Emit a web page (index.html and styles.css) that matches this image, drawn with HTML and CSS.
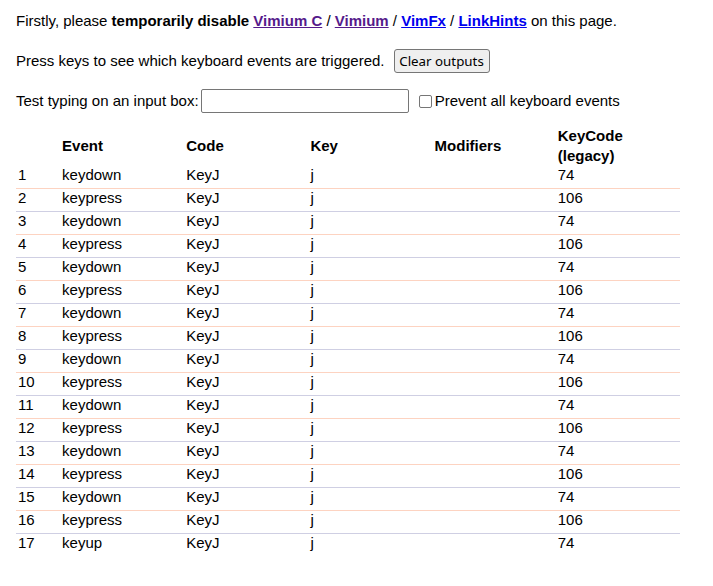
FILE: index.html
```html
<!DOCTYPE html>
<html>
<head>
<meta charset="utf-8">
<link rel="stylesheet" href="styles.css">
</head>
<body>
<div class="page">
  <p class="line intro">Firstly, please <b>temporarily disable</b> <a class="visited" href="#">Vimium C</a> / <a class="visited" href="#">Vimium</a> / <a href="#">VimFx</a> / <a href="#">LinkHints</a> on this page.</p>
  <div class="line row2"><span>Press keys to see which keyboard events are triggered.</span><button class="btn">Clear outputs</button></div>
  <div class="line row3"><span>Test typing on an input box:</span><input class="box" type="text"><label class="chk"><span class="cb"></span>Prevent all keyboard events</label></div>
  <table class="events">
    <thead>
      <tr><th class="c0"></th><th class="c1">Event</th><th class="c2">Code</th><th class="c3">Key</th><th class="c4">Modifiers</th><th class="c5">KeyCode<br>(legacy)</th></tr>
    </thead>
    <tbody>
      <tr class="odd"><td>1</td><td>keydown</td><td>KeyJ</td><td>j</td><td></td><td>74</td></tr>
      <tr class="even"><td>2</td><td>keypress</td><td>KeyJ</td><td>j</td><td></td><td>106</td></tr>
      <tr class="odd"><td>3</td><td>keydown</td><td>KeyJ</td><td>j</td><td></td><td>74</td></tr>
      <tr class="even"><td>4</td><td>keypress</td><td>KeyJ</td><td>j</td><td></td><td>106</td></tr>
      <tr class="odd"><td>5</td><td>keydown</td><td>KeyJ</td><td>j</td><td></td><td>74</td></tr>
      <tr class="even"><td>6</td><td>keypress</td><td>KeyJ</td><td>j</td><td></td><td>106</td></tr>
      <tr class="odd"><td>7</td><td>keydown</td><td>KeyJ</td><td>j</td><td></td><td>74</td></tr>
      <tr class="even"><td>8</td><td>keypress</td><td>KeyJ</td><td>j</td><td></td><td>106</td></tr>
      <tr class="odd"><td>9</td><td>keydown</td><td>KeyJ</td><td>j</td><td></td><td>74</td></tr>
      <tr class="even"><td>10</td><td>keypress</td><td>KeyJ</td><td>j</td><td></td><td>106</td></tr>
      <tr class="odd"><td>11</td><td>keydown</td><td>KeyJ</td><td>j</td><td></td><td>74</td></tr>
      <tr class="even"><td>12</td><td>keypress</td><td>KeyJ</td><td>j</td><td></td><td>106</td></tr>
      <tr class="odd"><td>13</td><td>keydown</td><td>KeyJ</td><td>j</td><td></td><td>74</td></tr>
      <tr class="even"><td>14</td><td>keypress</td><td>KeyJ</td><td>j</td><td></td><td>106</td></tr>
      <tr class="odd"><td>15</td><td>keydown</td><td>KeyJ</td><td>j</td><td></td><td>74</td></tr>
      <tr class="even"><td>16</td><td>keypress</td><td>KeyJ</td><td>j</td><td></td><td>106</td></tr>
      <tr class="last"><td>17</td><td>keyup</td><td>KeyJ</td><td>j</td><td></td><td>74</td></tr>
    </tbody>
  </table>
</div>
</body>
</html>
```
FILE: styles.css
```css
html, body {
  margin: 0;
  padding: 0;
  background: #fff;
}
.page {
  padding: 12px 16px 0 16px;
  font-family: "Liberation Sans", Arial, sans-serif;
  font-size: 15px;
  color: #000;
}
.line {
  margin: 0;
  line-height: 18px;
}
.intro a {
  text-decoration: underline;
  color: #0000ee;
  font-weight: bold;
}
.intro a.visited {
  color: #551a8b;
}
.row2 {
  display: flex;
  align-items: center;
  margin-top: 19px;
  height: 24px;
}
.btn {
  margin-left: 9px;
  height: 24px;
  width: 96px;
  padding: 0;
  font-family: "Noto Sans", "Open Sans", sans-serif;
  font-size: 13.33px;
  color: #000;
  background: #efefef;
  border: 1px solid #767676;
  border-radius: 3px;
}
.row3 {
  display: flex;
  align-items: center;
  margin-top: 16px;
  height: 24px;
}
.box {
  margin: 0 0 0 2px;
  width: 208px;
  height: 24px;
  box-sizing: border-box;
  border: 1px solid #767676;
  border-radius: 2px;
  padding: 1px 2px;
}
.chk {
  display: flex;
  align-items: center;
  margin-left: 10px;
}
.cb {
  display: inline-block;
  width: 13px;
  height: 13px;
  box-sizing: border-box;
  border: 1px solid #767676;
  border-radius: 2px;
  margin: 0 3px 0 0;
}
.events {
  margin-top: 13px;
  border-collapse: collapse;
  width: 664px;
}
.events th {
  text-align: left;
  font-weight: bold;
  line-height: 20px;
  padding: 0 2px;
  height: 40px;
  vertical-align: middle;
}
.events td {
  line-height: 17px;
  padding: 0 2px 5px 2px;
  text-align: left;
}
.c0 { width: 40px; }
.c1, .c2, .c3, .c5 { width: 120px; }
.c4 { width: 119px; }
.events tr.odd td {
  border-bottom: 1px solid #fdd3c1;
}
.events tr.even td {
  border-bottom: 1px solid #cfcfe3;
}
```
